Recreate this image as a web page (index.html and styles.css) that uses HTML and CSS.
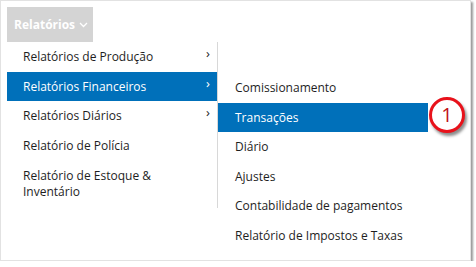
FILE: index.html
```html
<!DOCTYPE html>
<html lang="pt">
<head>
<meta charset="utf-8">
<link rel="stylesheet" href="styles.css">
</head>
<body>
<div class="frame">
  <div class="topbar">
    <div class="topbtn">Relatórios <svg class="caret" width="9" height="6" viewBox="0 0 9 6"><path d="M1 1 L4.5 4.5 L8 1" fill="none" stroke="#fff" stroke-width="1.3"/></svg></div>
  </div>
  <div class="menus">
    <ul class="menu main">
      <li class="item">Relatórios de Produção<span class="chev">›</span></li>
      <li class="item active">Relatórios Financeiros<span class="chev">›</span></li>
      <li class="item">Relatórios Diários<span class="chev">›</span></li>
      <li class="item">Relatório de Polícia</li>
      <li class="item multi">Relatório de Estoque &amp;<br>Inventário</li>
    </ul>
    <ul class="menu sub">
      <li class="item">Comissionamento</li>
      <li class="item active">Transações
        <span class="badge">1</span>
      </li>
      <li class="item">Diário</li>
      <li class="item">Ajustes</li>
      <li class="item">Contabilidade de pagamentos</li>
      <li class="item">Relatório de Impostos e Taxas</li>
    </ul>
  </div>
</div>
</body>
</html>
```

FILE: styles.css
```css
html, body {
  margin: 0;
  padding: 0;
  background: #fff;
}
body {
  font-family: "Open Sans", "Noto Sans", sans-serif;
  font-size: 12px;
  color: #1e1e1e;
}
.frame {
  border: 1px solid #e2e2e2;
  box-shadow: 2px 2px 2px #9a9a9a;
  padding: 6px;
  box-sizing: border-box;
  width: 471px;
  height: 261px;
}
.topbar {
  display: flex;
}
.topbtn {
  background: #d4d4d4;
  color: #fff;
  font-weight: 700;
  width: 86px;
  height: 35px;
  box-sizing: border-box;
  padding-left: 7px;
  display: flex;
  align-items: center;
  gap: 4px;
}
.caret {
  margin-top: 1px;
}
.menus {
  display: flex;
  align-items: flex-start;
}
.menu {
  list-style: none;
  margin: 0;
  padding: 0;
}
.main {
  width: 210px;
  border-right: 1px solid #d8d8d8;
  padding-bottom: 4px;
}
.sub {
  width: 210px;
  margin-top: 31px;
}
.item {
  position: relative;
  height: 29.5px;
  line-height: 29.5px;
  padding-left: 16px;
  white-space: nowrap;
}
.sub .item {
  padding-left: 17px;
}
.item.multi {
  height: auto;
  line-height: 16px;
  padding-top: 8px;
  padding-bottom: 4px;
}
.item.active {
  background: #0070ba;
  color: #fff;
}
.chev {
  position: absolute;
  right: 7px;
  top: -3px;
  font-size: 13px;
}
.badge {
  position: absolute;
  left: 211px;
  top: -6px;
  width: 30px;
  height: 30px;
  border: 3px solid #e8121b;
  border-radius: 50%;
  background: #fff;
  color: #c0141b;
  font-size: 20px;
  line-height: 30px;
  text-align: center;
  box-shadow: 2px 3px 3px rgba(0,0,0,0.45);
}
```
